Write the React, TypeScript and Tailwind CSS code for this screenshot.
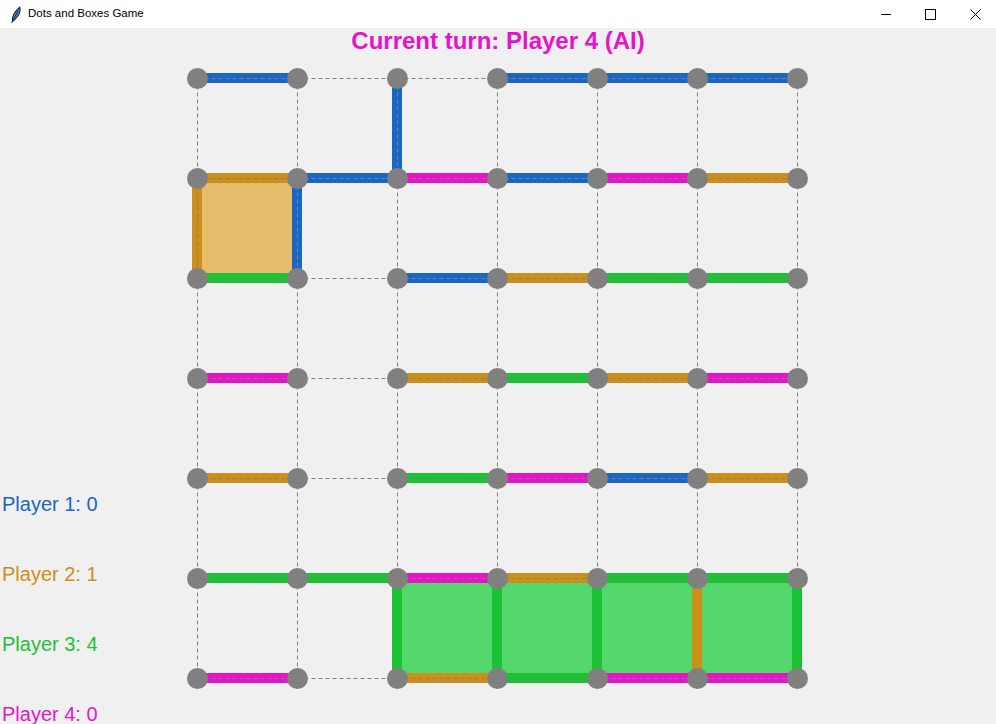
import React from "react";

const C = {
  blue: "#1a66c6",
  orange: "#cc8f1a",
  green: "#1bc234",
  magenta: "#e614c8",
};

type Seg = [number, number, string];

// horizontal: [row, col, color] segment from col to col+1
const H: Seg[] = [
  [0, 0, C.blue], [0, 3, C.blue], [0, 4, C.blue], [0, 5, C.blue],
  [1, 0, C.orange], [1, 1, C.blue], [1, 2, C.magenta], [1, 3, C.blue], [1, 4, C.magenta], [1, 5, C.orange],
  [2, 0, C.green], [2, 2, C.blue], [2, 3, C.orange], [2, 4, C.green], [2, 5, C.green],
  [3, 0, C.magenta], [3, 2, C.orange], [3, 3, C.green], [3, 4, C.orange], [3, 5, C.magenta],
  [4, 0, C.orange], [4, 2, C.green], [4, 3, C.magenta], [4, 4, C.blue], [4, 5, C.orange],
  [5, 0, C.green], [5, 1, C.green], [5, 2, C.magenta], [5, 3, C.orange], [5, 4, C.green], [5, 5, C.green],
  [6, 0, C.magenta], [6, 2, C.orange], [6, 3, C.green], [6, 4, C.magenta], [6, 5, C.magenta],
];

// vertical: [row, col, color] segment from row to row+1
const V: Seg[] = [
  [0, 2, C.blue],
  [1, 0, C.orange], [1, 1, C.blue],
  [5, 2, C.green], [5, 3, C.green], [5, 4, C.green], [5, 5, C.orange], [5, 6, C.green],
];

const BOXES: Seg[] = [
  [1, 0, "#e5bc6a"],
  [5, 2, "#55d86b"], [5, 3, "#55d86b"], [5, 4, "#55d86b"], [5, 5, "#55d86b"],
];

function Board() {
  const idx = [0, 1, 2, 3, 4, 5, 6];
  const dashes: React.ReactNode[] = [];
  idx.forEach((r) =>
    idx.slice(0, 6).forEach((c) => {
      dashes.push(
        <line
          key={`dh${r}-${c}`}
          x1={10.5 + 100 * c}
          x2={10.5 + 100 * (c + 1)}
          y1={10.5 + 100 * r}
          y2={10.5 + 100 * r}
        />
      );
    })
  );
  idx.slice(0, 6).forEach((r) =>
    idx.forEach((c) => {
      if (r === 5 && c >= 2) return;
      dashes.push(
        <line
          key={`dv${r}-${c}`}
          x1={10.5 + 100 * c}
          x2={10.5 + 100 * c}
          y1={10.5 + 100 * r}
          y2={10.5 + 100 * (r + 1)}
        />
      );
    })
  );
  return (
    <svg width="624" height="624" viewBox="0 0 624 624" className="block shrink-0">
      {BOXES.map(([r, c, col]) => (
        <rect key={`b${r}-${c}`} x={10 + 100 * c} y={10 + 100 * r} width="100" height="100" fill={col} />
      ))}
      {H.map(([r, c, col]) => (
        <line
          key={`h${r}-${c}`}
          x1={10 + 100 * c}
          x2={10 + 100 * (c + 1)}
          y1={10 + 100 * r}
          y2={10 + 100 * r}
          stroke={col}
          strokeWidth="10"
        />
      ))}
      {V.map(([r, c, col]) => (
        <line
          key={`v${r}-${c}`}
          x1={10 + 100 * c}
          x2={10 + 100 * c}
          y1={10 + 100 * r}
          y2={10 + 100 * (r + 1)}
          stroke={col}
          strokeWidth="10"
        />
      ))}
      <g stroke="#808080" strokeWidth="1" strokeDasharray="4 3">
        {dashes}
      </g>
      <g fill="#808080">
        {idx.map((r) =>
          idx.map((c) => <circle key={`d${r}-${c}`} cx={10.5 + 100 * c} cy={10.5 + 100 * r} r="10.5" />)
        )}
      </g>
    </svg>
  );
}

function TitleBar() {
  return (
    <div className="flex h-[28px] shrink-0 items-center bg-white">
      <svg width="16" height="18" viewBox="0 0 16 18" className="ml-[8px] mt-[1px] shrink-0">
        <path
          d="M4.5 15.5 C3.8 11.5 6 5.5 11.8 1.2 C13 4.5 11.2 10 6.2 14 Z"
          fill="#4f86d8"
          stroke="#16243d"
          strokeWidth="1.1"
        />
        <path d="M3.6 17 L10 5" stroke="#16243d" strokeWidth="0.9" />
      </svg>
      <span className="ml-[4px] text-[11.5px] leading-none text-black">Dots and Boxes Game</span>
      <div className="flex-1" />
      <svg width="10" height="10" viewBox="0 0 10 10" className="shrink-0">
        <line x1="0" x2="10" y1="5.5" y2="5.5" stroke="#000" strokeWidth="1" />
      </svg>
      <svg width="11" height="11" viewBox="0 0 11 11" className="ml-[34px] shrink-0">
        <rect x="0.5" y="0.5" width="10" height="10" fill="none" stroke="#000" strokeWidth="1" />
      </svg>
      <svg width="11" height="11" viewBox="0 0 11 11" className="ml-[34px] mr-[15px] shrink-0">
        <path d="M0.5 0.5 L10.5 10.5 M10.5 0.5 L0.5 10.5" stroke="#000" strokeWidth="1" />
      </svg>
    </div>
  );
}

export default function App() {
  const font = { fontFamily: '"Liberation Sans", Arial, sans-serif' };
  const players: [string, string][] = [
    ["Player 1: 0", C.blue],
    ["Player 2: 1", C.orange],
    ["Player 3: 4", C.green],
    ["Player 4: 0", C.magenta],
  ];
  return (
    <div className="flex h-[724px] w-[996px] flex-col overflow-hidden bg-[#f0f0f0]" style={font}>
      <TitleBar />
      <div
        className="h-[40px] shrink-0 text-center text-[24px] font-bold leading-[25px]"
        style={{ color: C.magenta }}
      >
        Current turn: Player 4 (AI)
      </div>
      <div className="flex shrink-0 items-start">
        <div className="flex w-[187px] shrink-0 flex-col pl-[2px] pt-[401px]">
          {players.map(([t, col]) => (
            <div
              key={t}
              className="h-[70px] shrink-0 whitespace-nowrap text-[20px] leading-[70px]"
              style={{ color: col }}
            >
              {t}
            </div>
          ))}
        </div>
        <Board />
      </div>
    </div>
  );
}
